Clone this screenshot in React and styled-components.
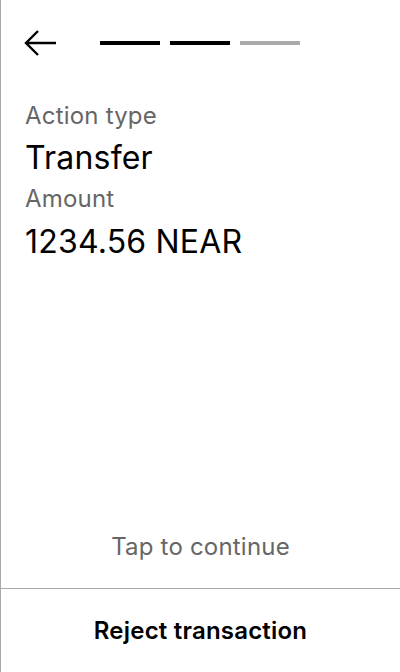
import React from "react";
import styled, { createGlobalStyle } from "styled-components";

const GlobalStyle = createGlobalStyle`
  html, body {
    margin: 0;
    padding: 0;
    background: #ffffff;
  }
  body {
    font-family: Inter, "Noto Sans", sans-serif;
    letter-spacing: 0.2px;
    color: #000000;
  }
  * {
    box-sizing: border-box;
  }
`;

const Screen = styled.div`
  width: 400px;
  height: 672px;
  display: flex;
  flex-direction: column;
  border-left: 1px solid #aaaaaa;
  background: #ffffff;
`;

const Header = styled.div`
  display: flex;
  align-items: center;
  height: 86px;
  padding: 0 0 0 22px;
  gap: 43px;
`;

const BackButton = styled.button`
  display: flex;
  align-items: center;
  justify-content: center;
  width: 34px;
  height: 30px;
  padding: 0;
  border: none;
  background: none;
  cursor: pointer;
`;

const Steps = styled.div`
  display: flex;
  gap: 10px;
  margin-top: -1px;
`;

const Step = styled.div`
  width: 60px;
  height: 4px;
  background: ${(props) => (props.done ? "#000000" : "#aaaaaa")};
`;

const Details = styled.div`
  display: flex;
  flex-direction: column;
  padding: 16px 24px 0;
  flex: 1;
`;

const Label = styled.div`
  font-size: 24px;
  line-height: 28px;
  color: #666666;
  margin-bottom: ${(props) => props.gap || 0}px;
`;

const Value = styled.div`
  font-size: 32px;
  line-height: 40px;
  color: #000000;
  margin-bottom: ${(props) => props.gap || 0}px;
`;

const Hint = styled.div`
  text-align: center;
  font-size: 24px;
  line-height: 28px;
  color: #666666;
  padding-bottom: 27px;
  cursor: pointer;
`;

const Footer = styled.div`
  border-top: 1px solid #aaaaaa;
  height: 84px;
  display: flex;
  align-items: center;
  justify-content: center;
`;

const RejectButton = styled.button`
  border: none;
  background: none;
  font-family: Inter, "Noto Sans", sans-serif;
  letter-spacing: 0.2px;
  font-size: 24px;
  font-weight: 600;
  color: #000000;
  cursor: pointer;
  padding: 0;
`;

const BackArrow = () => (
  <svg width="34" height="28" viewBox="0 0 34 28" fill="none">
    <path d="M33 14H3M15 2L3 14l12 12" stroke="#000" strokeWidth="2.4" />
  </svg>
);

const App = () => {
  const steps = [true, true, false];

  return (
    <Screen>
      <GlobalStyle />
      <Header>
        <BackButton aria-label="Back">
          <BackArrow />
        </BackButton>
        <Steps>
          {steps.map((done, i) => (
            <Step key={i} done={done} />
          ))}
        </Steps>
      </Header>
      <Details>
        <Label gap={8}>Action type</Label>
        <Value gap={7}>Transfer</Value>
        <Label gap={9}>Amount</Label>
        <Value>1234.56 NEAR</Value>
      </Details>
      <Hint>Tap to continue</Hint>
      <Footer>
        <RejectButton>Reject transaction</RejectButton>
      </Footer>
    </Screen>
  );
};

export default App;
